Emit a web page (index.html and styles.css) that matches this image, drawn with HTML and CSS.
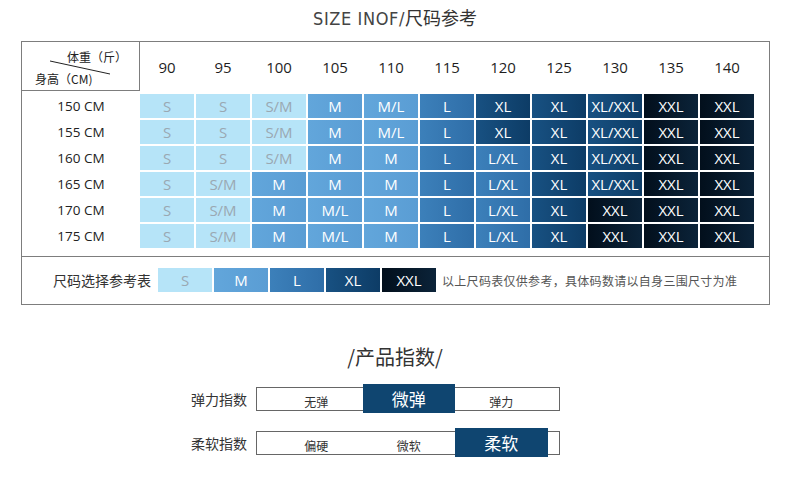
FILE: index.html
```html
<!DOCTYPE html>
<html lang="zh-CN">
<head>
<meta charset="utf-8">
<title>尺码参考</title>
<link rel="stylesheet" href="styles.css">
</head>
<body>
<h1 class="title"><span class="title-en">SIZE INOF/</span>尺码参考</h1>

<section class="chart">
  <div class="grid">
    <div class="corner">
      <svg class="corner-line" width="118" height="49" viewBox="0 0 118 49"><line x1="28" y1="19" x2="88" y2="32" stroke="#222" stroke-width="1"/></svg>
      <div class="corner-top">体重（斤）</div>
      <div class="corner-bottom">身高（CM)</div>
    </div>
    <div class="wt">90</div><div class="wt">95</div><div class="wt">100</div><div class="wt">105</div><div class="wt">110</div><div class="wt">115</div><div class="wt">120</div><div class="wt">125</div><div class="wt">130</div><div class="wt">135</div><div class="wt">140</div>

    <div class="ht">150 CM</div>
    <div class="c c-s">S</div><div class="c c-s">S</div><div class="c c-s">S/M</div><div class="c c-m">M</div><div class="c c-m">M/L</div><div class="c c-l">L</div><div class="c c-xl">XL</div><div class="c c-xl">XL</div><div class="c c-xl">XL/XXL</div><div class="c c-xxl">XXL</div><div class="c c-xxl">XXL</div>

    <div class="ht">155 CM</div>
    <div class="c c-s">S</div><div class="c c-s">S</div><div class="c c-s">S/M</div><div class="c c-m">M</div><div class="c c-m">M/L</div><div class="c c-l">L</div><div class="c c-xl">XL</div><div class="c c-xl">XL</div><div class="c c-xl">XL/XXL</div><div class="c c-xxl">XXL</div><div class="c c-xxl">XXL</div>

    <div class="ht">160 CM</div>
    <div class="c c-s">S</div><div class="c c-s">S</div><div class="c c-s">S/M</div><div class="c c-m">M</div><div class="c c-m">M</div><div class="c c-l">L</div><div class="c c-l">L/XL</div><div class="c c-xl">XL</div><div class="c c-xl">XL/XXL</div><div class="c c-xxl">XXL</div><div class="c c-xxl">XXL</div>

    <div class="ht">165 CM</div>
    <div class="c c-s">S</div><div class="c c-s">S/M</div><div class="c c-m">M</div><div class="c c-m">M</div><div class="c c-m">M</div><div class="c c-l">L</div><div class="c c-l">L/XL</div><div class="c c-xl">XL</div><div class="c c-xl">XL/XXL</div><div class="c c-xxl">XXL</div><div class="c c-xxl">XXL</div>

    <div class="ht">170 CM</div>
    <div class="c c-s">S</div><div class="c c-s">S/M</div><div class="c c-m">M</div><div class="c c-m">M/L</div><div class="c c-m">M</div><div class="c c-l">L</div><div class="c c-l">L/XL</div><div class="c c-xl">XL</div><div class="c c-xxl">XXL</div><div class="c c-xxl">XXL</div><div class="c c-xxl">XXL</div>

    <div class="ht">175 CM</div>
    <div class="c c-s">S</div><div class="c c-s">S/M</div><div class="c c-m">M</div><div class="c c-m">M/L</div><div class="c c-m">M</div><div class="c c-l">L</div><div class="c c-l">L/XL</div><div class="c c-xl">XL</div><div class="c c-xxl">XXL</div><div class="c c-xxl">XXL</div><div class="c c-xxl">XXL</div>
  </div>

  <div class="legend">
    <div class="legend-label">尺码选择参考表</div>
    <div class="c c-s">S</div>
    <div class="c c-m">M</div>
    <div class="c c-l">L</div>
    <div class="c c-xl">XL</div>
    <div class="c c-xxl">XXL</div>
    <div class="legend-note">以上尺码表仅供参考，具体码数请以自身三围尺寸为准</div>
  </div>
</section>

<section class="index">
  <h2 class="index-title">/产品指数/</h2>
  <div class="index-row">
    <div class="index-label">弹力指数</div>
    <div class="scale">
      <div class="opt">无弹</div>
      <div class="opt opt-on">微弹</div>
      <div class="opt">弹力</div>
    </div>
  </div>
  <div class="index-row">
    <div class="index-label">柔软指数</div>
    <div class="scale">
      <div class="opt">偏硬</div>
      <div class="opt">微软</div>
      <div class="opt opt-on">柔软</div>
    </div>
  </div>
</section>
</body>
</html>
```

FILE: styles.css
```css
* { box-sizing: border-box; }

body {
  margin: 0;
  background: #fff;
  width: 790px;
  font-family: "Open Sans", "Noto Sans CJK SC", sans-serif;
  color: #222;
}

.title {
  margin: 0;
  padding-top: 6px;
  height: 40px;
  text-align: center;
  font-family: "Noto Sans CJK SC", sans-serif;
  font-weight: 400;
  font-size: 18px;
  line-height: 22px;
  color: #333;
}

.title-en {
  font-family: "DejaVu Sans Condensed", "Liberation Sans Narrow", "Liberation Sans", sans-serif;
  font-size: 18px;
  letter-spacing: 0.6px;
  font-weight: 300;
  color: #444;
}

.chart {
  margin: 1px 0 0 21px;
  width: 749px;
  height: 264px;
  border: 1px solid #7d7d7d;
}

.grid {
  display: grid;
  grid-template-columns: 116px repeat(11, 54px);
  grid-template-rows: 50px repeat(6, 24px);
  column-gap: 2px;
  row-gap: 2px;
}

.corner {
  position: relative;
  width: 118px;
  height: 49px;
  border-right: 1px solid #7d7d7d;
  border-bottom: 1px solid #7d7d7d;
  font-family: "Noto Sans CJK SC", sans-serif;
  font-size: 12px;
  line-height: 16px;
  color: #222;
}

.corner-line {
  position: absolute;
  left: 0;
  top: 0;
}

.corner-top {
  padding: 7px 0 0 45px;
}

.corner-bottom {
  padding: 6px 0 0 13px;
  font-size: 12px;
}

.wt {
  display: flex;
  align-items: center;
  justify-content: center;
  height: 49px;
  font-size: 15px;
  color: #1e1e1e;
}

.ht {
  display: flex;
  align-items: center;
  justify-content: center;
  font-size: 13.5px;
  color: #222;
  padding-left: 2px;
}

.c {
  display: flex;
  align-items: center;
  justify-content: center;
  width: 54px;
  height: 24px;
  font-size: 15px;
  color: #fff;
  white-space: nowrap;
}

.c-s {
  background: #b6e4f8;
  color: #9aa8b2;
}

.c-m {
  background: linear-gradient(90deg, #62a6db, #5a9dd4);
}

.c-l {
  background: linear-gradient(90deg, #3c80ba, #2f6ea8);
}

.c-xl {
  background: linear-gradient(90deg, #185182, #0d3c66);
}

.c-xxl {
  background: linear-gradient(90deg, #020f1c, #0b2339);
}

.legend {
  display: flex;
  align-items: center;
  gap: 2px;
  margin-top: 8px;
  height: 47px;
  border-top: 1px solid #7d7d7d;
}

.legend-label {
  width: 134px;
  padding-right: 5px;
  text-align: right;
  font-family: "Noto Sans CJK SC", sans-serif;
  font-size: 14px;
  color: #333;
}

.legend-note {
  margin-left: 4px;
  font-family: "Noto Sans CJK SC", sans-serif;
  font-size: 12px;
  color: #555;
  letter-spacing: 0.3px;
}

.index {
  margin-top: 38px;
}

.index-title {
  margin: 0 0 13px;
  text-align: center;
  font-family: "Noto Sans CJK SC", sans-serif;
  font-weight: 400;
  font-size: 20px;
  line-height: 28px;
  color: #333;
}

.index-row {
  display: flex;
  align-items: center;
  height: 29px;
  margin-bottom: 15px;
  padding-left: 191px;
  font-family: "Noto Sans CJK SC", sans-serif;
}

.index-label {
  width: 65px;
  font-size: 14px;
  color: #333;
}

.scale {
  display: flex;
  align-items: center;
  width: 304px;
  height: 24px;
  padding-left: 13px;
  border: 1px solid #666;
}

.opt {
  width: 92.5px;
  padding-top: 5px;
  text-align: center;
  font-size: 12px;
  color: #333;
}

.opt-on {
  display: flex;
  align-items: center;
  justify-content: center;
  height: 29px;
  padding-top: 0;
  background: #0f4570;
  color: #fff;
  font-size: 17px;
}
```
